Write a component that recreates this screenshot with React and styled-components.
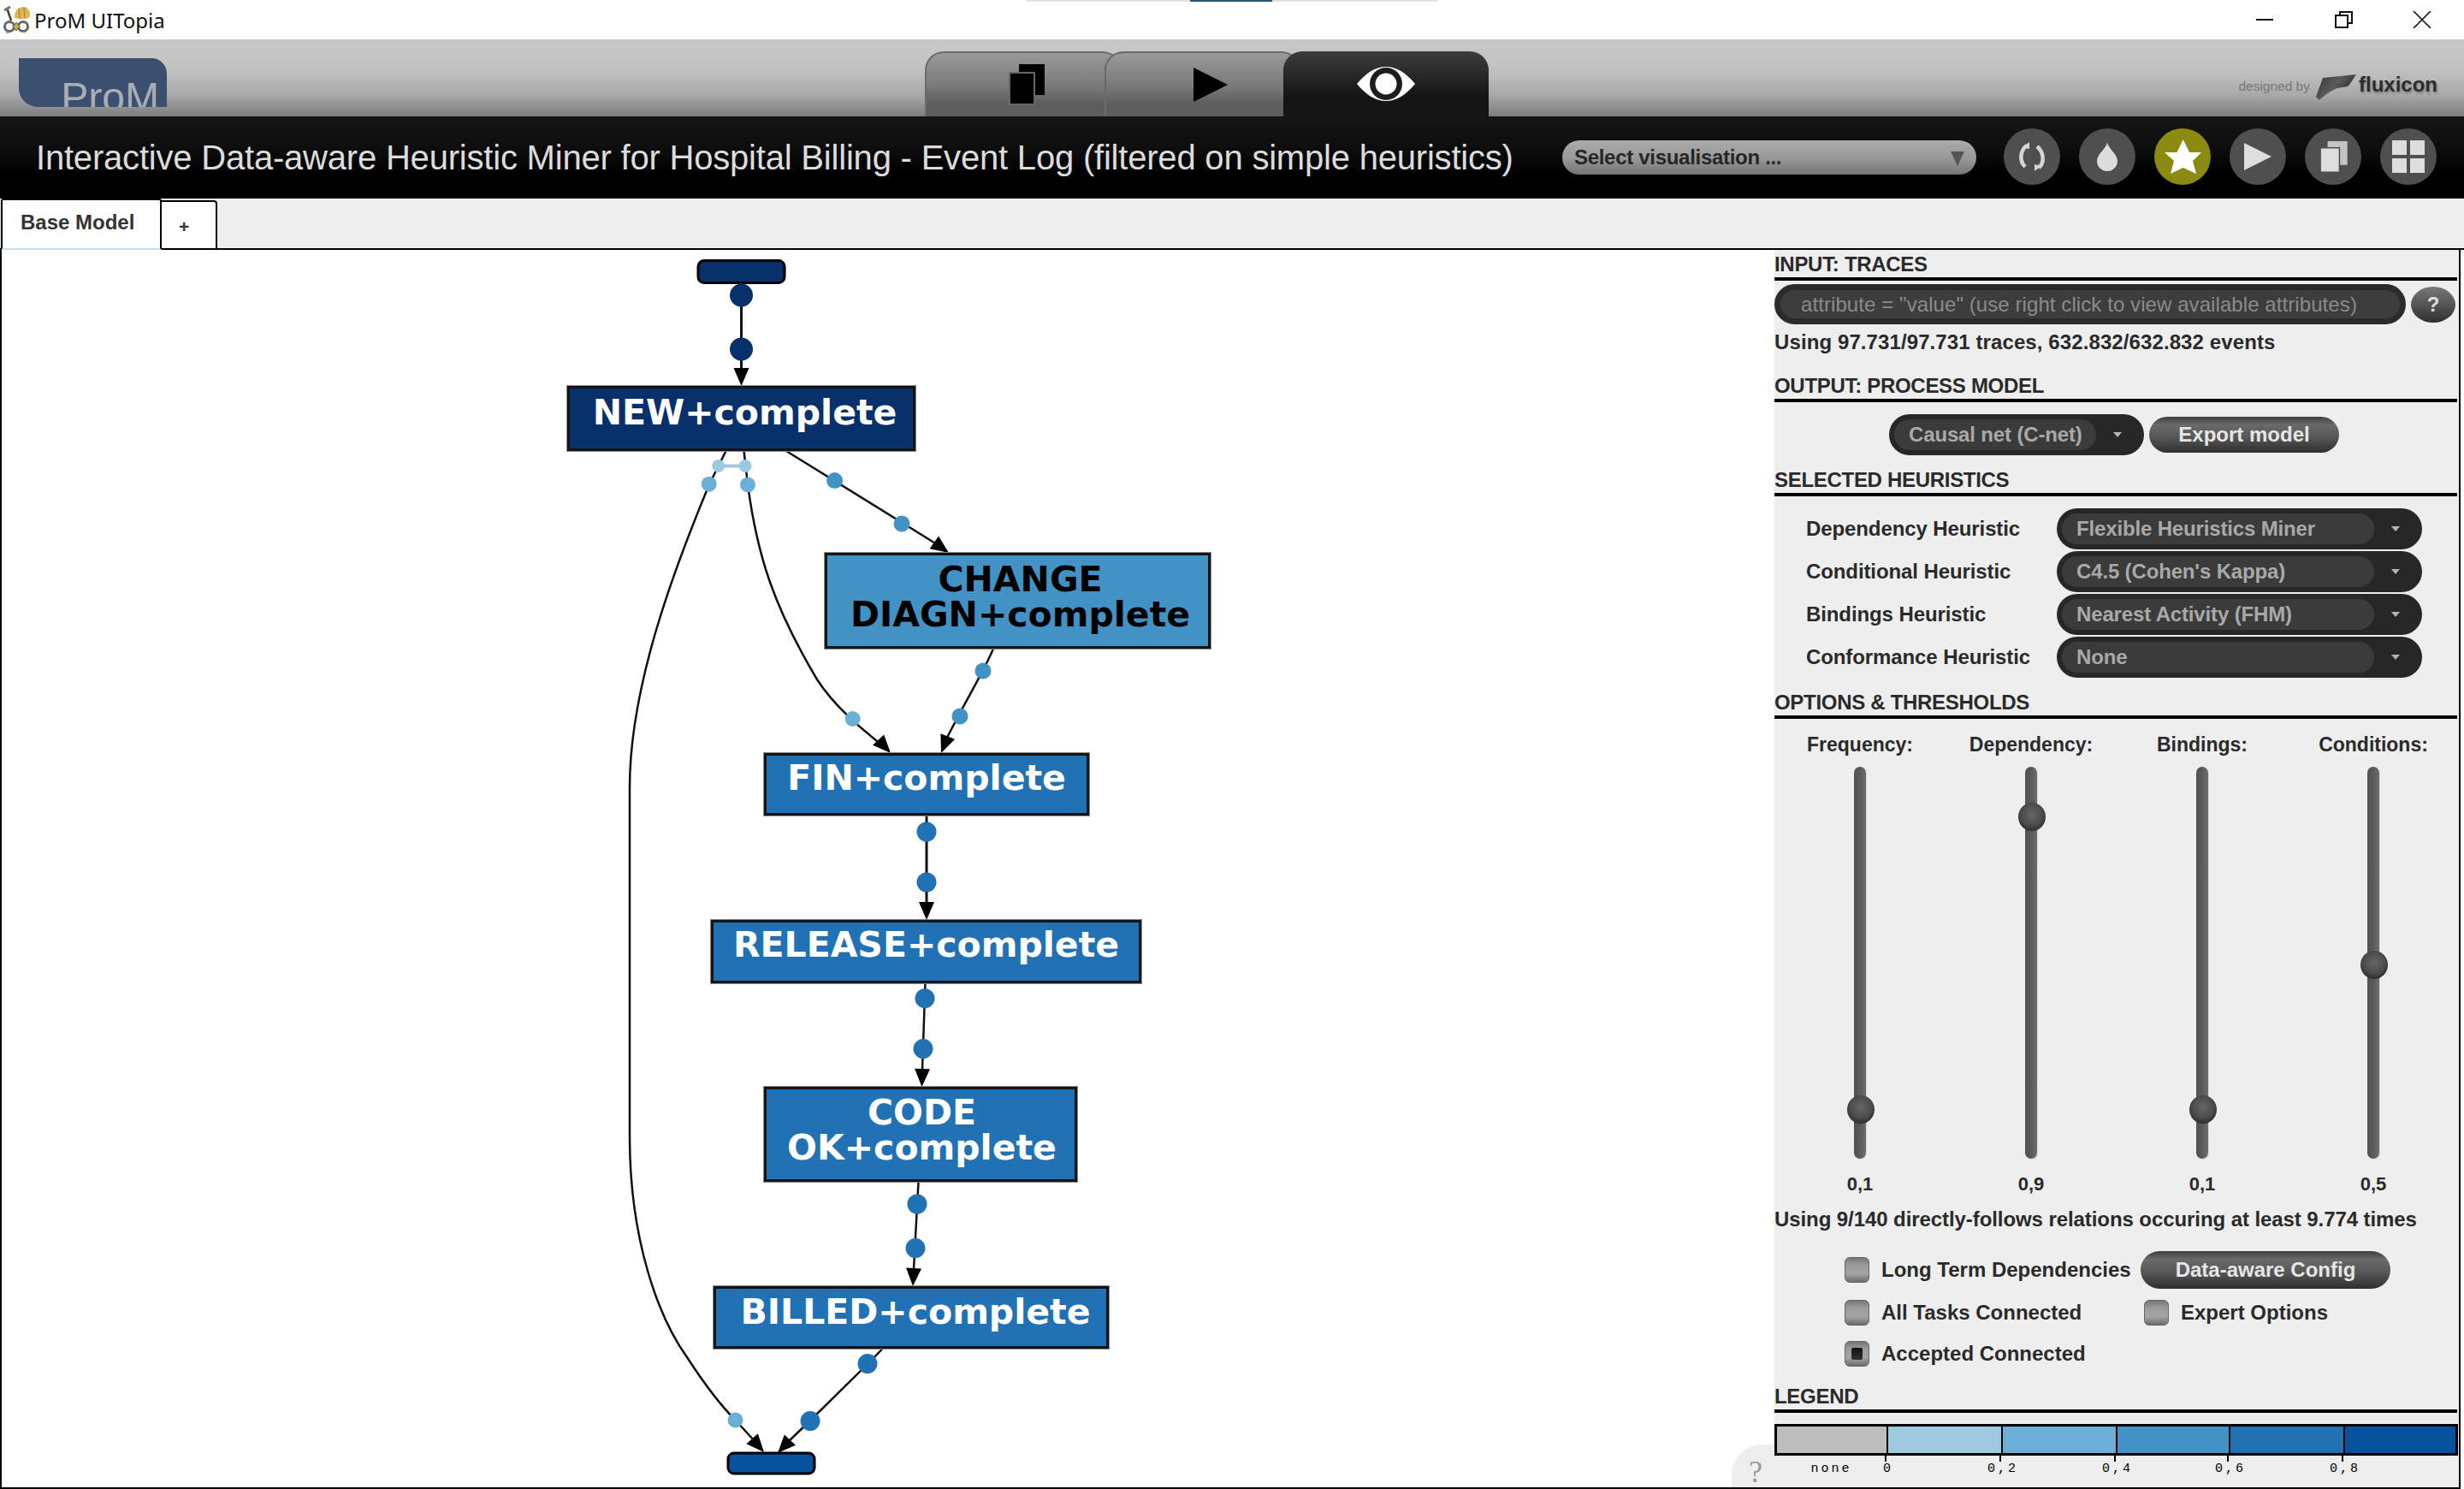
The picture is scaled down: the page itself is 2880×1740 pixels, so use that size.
import React from 'react'
import styled, { createGlobalStyle } from 'styled-components'

const GlobalStyle = createGlobalStyle`
    html, body { margin: 0; padding: 0; background: #fff; height: 1740px; overflow: hidden; }
    body { font-family: "Liberation Sans", Arial, sans-serif; }
    * { box-sizing: border-box; }
`

const Page = styled.div`
    width: 2880px;
    height: 1740px;
    display: flex;
    flex-direction: column;
    position: relative;
    overflow: hidden;
    background: #fff;
`

/* window chrome */
const TaskStrip = styled.div`
    position: absolute;
    left: 1199px;
    top: 0;
    width: 482px;
    height: 2px;
    background: linear-gradient(90deg, #e4e4e4 0 192px, #2b5570 192px 288px, #e4e4e4 288px);
`

const TitleBar = styled.div`
    height: 46px;
    display: flex;
    align-items: center;
    padding: 0 3px 0 3px;
    background: #fff;
`

const AppName = styled.span`
    margin-left: 5px;
    font-family: "Noto Sans", sans-serif;
    font-size: 24px;
    color: #111;
`

const WindowControls = styled.div`
    margin-left: auto;
    display: flex;
`

const WindowButton = styled.div`
    width: 92px;
    height: 46px;
    display: flex;
    align-items: center;
    justify-content: center;
`

/* grey header */
const Header = styled.div`
    height: 90px;
    display: flex;
    align-items: flex-end;
    padding: 0 31px 0 22px;
    background: linear-gradient(180deg, #c8c8c8 0%, #c3c3c3 38%, #a9a9a9 72%, #7d7d7d 100%);
`

const Logo = styled.div`
    width: 173px;
    height: 57px;
    margin-bottom: 11px;
    padding: 22px 9px 0 0;
    overflow: hidden;
    text-align: right;
    background: #3b4f6e;
    border-radius: 0 18px 0 22px;
    font-size: 48px;
    line-height: 48px;
    color: #a9aeb6;
`

const PerspectiveTabs = styled.div`
    display: flex;
    margin-left: 886px;
`

const PerspectiveTab = styled.div`
    position: relative;
    width: ${props => props.$width}px;
    height: 76px;
    margin-left: ${props => props.$overlap}px;
    padding-left: ${props => props.$inset}px;
    display: flex;
    align-items: center;
    justify-content: center;
    border-radius: 22px 22px 0 0;
    border: ${props => props.$active ? 'none' : '2px solid #6a6a6a'};
    border-bottom: none;
    background: ${props => props.$active
        ? 'linear-gradient(180deg, #3c3c3c 0%, #262626 40%, #141414 72%, #141414 100%)'
        : 'linear-gradient(180deg, #999 0%, #7b7b7b 50%, #5d5d5d 82%, #5d5d5d 100%)'};
`

const Credit = styled.div`
    margin-left: auto;
    height: 90px;
    display: flex;
    align-items: flex-start;
    padding-top: 41px;
`

const DesignedBy = styled.span`
    margin: 3px 7px 0 0;
    font-size: 15.5px;
    line-height: 22px;
    color: #777;
`

const FluxWord = styled.span`
    margin: 2px 0 0 3px;
    font-size: 24px;
    line-height: 20px;
    font-weight: bold;
    color: #2c2c2c;
    text-shadow: 1px 2px 3px rgba(0, 0, 0, 0.3);
`

/* black toolbar */
const Toolbar = styled.div`
    height: 96px;
    display: flex;
    align-items: center;
    padding: 0 32px 0 42px;
    background: linear-gradient(180deg, #151515 0%, #0d0d0d 40%, #000 70%, #000 100%);
`

const Title = styled.div`
    font-size: 40px;
    color: #dcdcdc;
    white-space: nowrap;
    letter-spacing: -0.2px;
`

const VisualisationSelect = styled.div`
    width: 484px;
    height: 40px;
    margin-left: auto;
    display: flex;
    align-items: center;
    justify-content: space-between;
    padding: 0 14px;
    border-radius: 20px;
    background: linear-gradient(180deg, #ababab 0%, #9a9a9a 50%, #747474 100%);
    font-size: 24px;
    font-weight: bold;
    letter-spacing: -0.3px;
    color: #262626;
`

const SelectCaret = styled.span`
    width: 0;
    height: 0;
    margin-top: 2px;
    border-left: 8px solid transparent;
    border-right: 8px solid transparent;
    border-top: 17px solid #555;
`

const RoundButtons = styled.div`
    display: flex;
    gap: 22px;
    margin-left: 32px;
`

const RoundButton = styled.div`
    width: 66px;
    height: 66px;
    margin-top: -2px;
    border-radius: 50%;
    background: ${props => props.$on ? '#8b8b12' : '#4f4f4f'};
    display: flex;
    align-items: center;
    justify-content: center;
`

/* document tabs */
const TabStrip = styled.div`
    height: 60px;
    display: flex;
    align-items: flex-end;
    padding-left: 1px;
    background: #eee;
    border-bottom: 2px solid #000;
`

const DocTab = styled.div`
    width: 188px;
    height: 60px;
    margin-bottom: -2px;
    padding: 12px 0 0 21px;
    background: #fff;
    border: 2px solid #000;
    border-bottom: 2px solid #c9def2;
    border-radius: 3px 3px 0 0;
    font-size: 24px;
    line-height: 28px;
    font-weight: bold;
    color: #333;
`

const AddTab = styled.div`
    width: 65px;
    height: 56px;
    background: #fff;
    border: 2px solid #000;
    border-left: none;
    border-bottom: none;
    border-radius: 0 4px 0 0;
    padding: 17px 0 0 20px;
    font-size: 21px;
    line-height: 24px;
    font-weight: bold;
    color: #333;
`

const Workspace = styled.div`
    flex: 1;
    display: flex;
    padding-right: 2px;
    min-height: 0;
`

/* process model canvas */
const Canvas = styled.div`
    position: relative;
    width: 2074px;
    height: 1448px;
    background: #fff;
    border-bottom: 2px solid #000;
    box-shadow: inset 2px 0 0 #000;
`

const EdgeLayer = styled.svg`
    position: absolute;
    left: 0;
    top: 0;
`

const GraphNode = styled.div`
    position: absolute;
    left: ${props => props.$x}px;
    top: ${props => props.$y}px;
    width: ${props => props.$w}px;
    height: ${props => props.$h}px;
    padding-top: ${props => props.$pad}px;
    padding-left: ${props => props.$shift}px;
    background: ${props => props.$fill};
    border: 3px solid #141414;
    outline: 1px solid #8a8a8a;
    color: ${props => props.$ink};
    font-family: "DejaVu Sans", sans-serif;
    font-weight: bold;
    font-size: 41px;
    line-height: 41px;
    text-align: center;
    white-space: pre-line;
`

const HelpCorner = styled.div`
    position: absolute;
    right: 0;
    bottom: 0;
    width: 50px;
    height: 50px;
    padding: 14px 0 0 20px;
    border-radius: 36px 0 0 0;
    background: #eee;
    font-family: "Liberation Serif", serif;
    font-size: 36px;
    line-height: 36px;
    color: #9a9a9a;
`

/* right panel */
const Panel = styled.div`
    width: 802px;
    height: 1448px;
    padding-top: 3px;
    background: #eee;
    border-right: 2px solid #000;
    border-bottom: 2px solid #000;
    display: flex;
    flex-direction: column;
    color: #2a2a2a;
`

const SectionTitle = styled.div`
    height: 33px;
    margin-top: ${props => props.$top || 0}px;
    margin-right: 2px;
    border-bottom: 4px solid #000;
    font-size: 24px;
    line-height: 28px;
    font-weight: bold;
    letter-spacing: -0.3px;
`

const Note = styled.div`
    margin-top: ${props => props.$top}px;
    height: 28px;
    font-size: 24px;
    line-height: 28px;
    font-weight: bold;
    letter-spacing: ${props => props.$spacing}px;
    white-space: nowrap;
`

const FilterRow = styled.div`
    margin-top: 4px;
    display: flex;
    align-items: center;
    gap: 6px;
`

const FilterInput = styled.div`
    width: 738px;
    height: 47px;
    padding: 0 0 0 24px;
    display: flex;
    align-items: center;
    border: 7px solid #2b2b2b;
    border-radius: 24px;
    background: #3d3d3d;
    font-size: 24px;
    letter-spacing: 0.08px;
    color: #8b8b8b;
    white-space: nowrap;
`

const HelpButton = styled.div`
    width: 52px;
    height: 42px;
    border-radius: 50%;
    background: linear-gradient(180deg, #777 0%, #555 50%, #2f2f2f 100%);
    display: flex;
    align-items: center;
    justify-content: center;
    font-size: 24px;
    font-weight: bold;
    color: #ddd;
`

const OutputRow = styled.div`
    margin-top: 14px;
    padding-left: 134px;
    display: flex;
    align-items: center;
    gap: 6px;
`

const DarkSelect = styled.div`
    width: ${props => props.$width}px;
    height: 48px;
    padding: 6px;
    display: flex;
    align-items: stretch;
    border-radius: 24px;
    background: #272727;
`

const DarkSelectValue = styled.div`
    flex: 1;
    display: flex;
    align-items: center;
    padding-left: 17px;
    border-radius: 18px;
    background: #3b3b3b;
    font-size: 24px;
    font-weight: bold;
    letter-spacing: -0.15px;
    color: #a9a9a9;
    white-space: nowrap;
`

const DarkSelectCaret = styled.div`
    width: 50px;
    display: flex;
    align-items: center;
    justify-content: center;

    &::after {
        content: '';
        border-left: 5px solid transparent;
        border-right: 5px solid transparent;
        border-top: 6px solid #b5b5b5;
    }
`

const PillButton = styled.div`
    width: ${props => props.$width}px;
    height: ${props => props.$height}px;
    display: flex;
    align-items: center;
    justify-content: center;
    border-radius: 22px;
    background: linear-gradient(180deg, #3e3e3e 0%, #6a6a6a 22%, #585858 55%, #2f2f2f 100%);
    font-size: 24px;
    font-weight: bold;
    color: #e6e6e6;
    white-space: nowrap;
`

const HeuristicList = styled.div`
    margin-top: 14px;
    display: flex;
    flex-direction: column;
    gap: 2px;
`

const HeuristicRow = styled.div`
    display: flex;
    align-items: center;
    padding-left: 37px;
`

const HeuristicLabel = styled.div`
    width: 293px;
    font-size: 24px;
    font-weight: bold;
    letter-spacing: -0.1px;
    white-space: nowrap;
`

const Sliders = styled.div`
    margin-top: 16px;
    display: grid;
    grid-template-columns: repeat(4, 200px);
`

const SliderColumn = styled.div`
    display: flex;
    flex-direction: column;
    align-items: center;
`

const SliderName = styled.div`
    height: 28px;
    font-size: 23px;
    line-height: 28px;
    font-weight: bold;
`

const SliderTrack = styled.div`
    position: relative;
    width: 14px;
    height: 458px;
    margin-top: 12px;
    border-radius: 7px;
    background: linear-gradient(90deg, #505050 0%, #5a5a5a 50%, #6e6e6e 100%);
    box-shadow: 1px 1px 1px #d8d8d8;
`

const SliderThumb = styled.div`
    position: absolute;
    left: -8px;
    top: ${props => props.$at - 16}px;
    width: 32px;
    height: 33px;
    border-radius: 50%;
    background: radial-gradient(circle at 50% 42%, #666 0%, #4c4c4c 50%, #333 72%, #111 100%);
`

const SliderValue = styled.div`
    height: 28px;
    margin-top: 16px;
    font-size: 22px;
    line-height: 28px;
    font-weight: bold;
`

const OptionRow = styled.div`
    margin-top: ${props => props.$top}px;
    height: ${props => props.$height}px;
    display: flex;
    align-items: center;
    padding-left: 82px;
`

const Option = styled.label`
    display: flex;
    align-items: center;
    gap: 14px;
    width: ${props => props.$width}px;
    padding-left: ${props => props.$inset || 0}px;
    font-size: 24px;
    font-weight: bold;
    white-space: nowrap;
`

const CheckBox = styled.span`
    flex: none;
    width: 29px;
    height: 30px;
    padding: 7px;
    border-radius: 6px;
    background: linear-gradient(180deg, #777 0%, #9b9b9b 30%, #a5a5a5 65%, #6d6d6d 100%);
    border: 1px solid #666;

    &::after {
        content: '';
        display: ${props => props.$on ? 'block' : 'none'};
        width: 100%;
        height: 100%;
        border-radius: 2px;
        background: linear-gradient(180deg, #111 0%, #333 100%);
    }
`

const LegendBar = styled.div`
    width: 799px;
    height: 37px;
    margin-top: 13px;
    display: flex;
    border: 3px solid #000;
`

const LegendCell = styled.div`
    width: ${props => props.$width}px;
    background: ${props => props.$fill};
    border-right: ${props => props.$last ? 'none' : '2px solid #000'};
`

const LegendScale = styled.div`
    display: flex;
    font-family: "Liberation Mono", monospace;
    font-size: 15px;
    letter-spacing: 3px;
    line-height: 16px;
    color: #000;
`

const LegendMark = styled.div`
    position: relative;
    width: ${props => props.$width}px;
    height: 25px;
    padding-top: 8px;
    text-align: ${props => props.$plain ? 'center' : 'left'};

    &::before {
        content: '';
        display: ${props => props.$plain ? 'none' : 'block'};
        position: absolute;
        left: -1px;
        top: 0;
        width: 2px;
        height: 7px;
        background: #000;
    }
`

const LegendLabel = styled.span`
    display: inline-block;
    margin-left: 3px;
    transform: translateX(${props => props.$plain ? '0' : '-50%'});
`

const nodes = [
    { label: 'NEW+complete', x: 663, y: 451, w: 407, h: 76, fill: '#08306b', ink: '#fff', pad: 8, shift: 8 },
    { label: 'CHANGE\nDIAGN+complete', x: 964, y: 646, w: 451, h: 112, fill: '#4292c6', ink: '#000', pad: 8, shift: 6 },
    { label: 'FIN+complete', x: 893, y: 880, w: 380, h: 73, fill: '#2171b5', ink: '#fff', pad: 6, shift: 0 },
    { label: 'RELEASE+complete', x: 831, y: 1075, w: 503, h: 74, fill: '#2171b5', ink: '#fff', pad: 6, shift: 0 },
    { label: 'CODE\nOK+complete', x: 893, y: 1270, w: 366, h: 111, fill: '#2171b5', ink: '#fff', pad: 7, shift: 3 },
    { label: 'BILLED+complete', x: 834, y: 1503, w: 462, h: 73, fill: '#2171b5', ink: '#fff', pad: 7, shift: 10 },
]

const edges = [
    { d: 'M866.5 330 L866.5 432', tip: [866.5, 451], from: [866.5, 431], w: 3 },
    { d: 'M919 527 L1095 636', tip: [1109, 646], from: [1092, 634] },
    { d: 'M1161 758 C1150 785 1125 825 1104 868', tip: [1100, 880], from: [1108, 860] },
    { d: 'M869.5 527 L874 566 C885 650 905 710 955 794 C975 825 1005 850 1030 870', tip: [1041, 880], from: [1026, 864] },
    { d: 'M848.5 527 L829 566 C790 660 736 800 736 920 L736 1328 C736 1450 770 1540 803 1586 C825 1620 845 1645 860 1660 L882 1684', tip: [893, 1697], from: [878, 1680] },
    { d: 'M1031.6 1576 L1014 1594 L947 1660 L920 1686', tip: [909, 1698], from: [924, 1682] },
    { d: 'M1083 952 L1083 1055', tip: [1083, 1075], from: [1083, 1055], w: 3 },
    { d: 'M1081.5 1148 L1078 1250', tip: [1077.5, 1270], from: [1078, 1250] },
    { d: 'M1073.5 1381 L1068 1483', tip: [1067, 1503], from: [1068, 1483] },
]

const dots = [
    { x: 866.5, y: 345, r: 13.5, fill: '#08306b' },
    { x: 866.5, y: 408, r: 13.5, fill: '#08306b' },
    { x: 975.6, y: 561.6, r: 9.5, fill: '#4292c6' },
    { x: 1054, y: 612, r: 9.5, fill: '#4292c6' },
    { x: 1149, y: 784, r: 9.5, fill: '#4292c6' },
    { x: 1122, y: 837, r: 9.5, fill: '#4292c6' },
    { x: 828.7, y: 565.7, r: 9, fill: '#6baed6' },
    { x: 874, y: 566.5, r: 9, fill: '#6baed6' },
    { x: 996.6, y: 840, r: 9, fill: '#6baed6' },
    { x: 859.5, y: 1659.5, r: 9, fill: '#6baed6' },
    { x: 839.7, y: 544.5, r: 7.5, fill: '#9ecae1' },
    { x: 871, y: 544.5, r: 7.5, fill: '#9ecae1' },
    { x: 1083, y: 972, r: 11.5, fill: '#2171b5' },
    { x: 1083, y: 1031, r: 11.5, fill: '#2171b5' },
    { x: 1081, y: 1166.7, r: 11.5, fill: '#2171b5' },
    { x: 1079, y: 1225.6, r: 11.5, fill: '#2171b5' },
    { x: 1072, y: 1407, r: 11.5, fill: '#2171b5' },
    { x: 1070, y: 1458.6, r: 11.5, fill: '#2171b5' },
    { x: 1014, y: 1593.6, r: 11.5, fill: '#2171b5' },
    { x: 947, y: 1660.6, r: 11.5, fill: '#2171b5' },
]

const heuristics = [
    ['Dependency Heuristic', 'Flexible Heuristics Miner'],
    ['Conditional Heuristic', "C4.5 (Cohen's Kappa)"],
    ['Bindings Heuristic', 'Nearest Activity (FHM)'],
    ['Conformance Heuristic', 'None'],
]

const sliders = [
    { name: 'Frequency:', value: '0,1', at: 400 },
    { name: 'Dependency:', value: '0,9', at: 58 },
    { name: 'Bindings:', value: '0,1', at: 400 },
    { name: 'Conditions:', value: '0,5', at: 231 },
]

const legend = [
    { fill: '#bdbdbd', width: 130, label: 'none', plain: true },
    { fill: '#9ecae1', width: 134, label: '0' },
    { fill: '#6baed6', width: 134, label: '0,2' },
    { fill: '#4292c6', width: 132, label: '0,4' },
    { fill: '#2171b5', width: 134, label: '0,6' },
    { fill: '#08519c', width: 129, label: '0,8', last: true },
]

function arrowPoints([tx, ty], [fx, fy]) {
    const a = Math.atan2(ty - fy, tx - fx)
    const bx = tx - Math.cos(a) * 21
    const by = ty - Math.sin(a) * 21
    const nx = -Math.sin(a) * 9
    const ny = Math.cos(a) * 9
    return `${tx},${ty} ${bx + nx},${by + ny} ${bx - nx},${by - ny}`
}

const Graph = () => (
    <EdgeLayer width="2074" height="1446" viewBox="0 292 2074 1446">
        <rect x="816" y="304.5" width="101" height="26" rx="7" fill="#08306b" stroke="#000" strokeWidth="3" />
        <rect x="851" y="1698" width="101" height="24" rx="7" fill="#08519c" stroke="#000" strokeWidth="3" />
        {edges.map(e => (
            <g key={e.d}>
                <path d={e.d} fill="none" stroke="#111" strokeWidth={e.w || 2.5} />
                <polygon points={arrowPoints(e.tip, e.from)} fill="#000" />
            </g>
        ))}
        <line x1="840" y1="544.5" x2="871" y2="544.5" stroke="#9ecae1" strokeWidth="4" />
        {dots.map(d => <circle key={`${d.x}-${d.y}`} cx={d.x} cy={d.y} r={d.r} fill={d.fill} />)}
    </EdgeLayer>
)

const AppIcon = () => (
    <svg width="32" height="32" viewBox="0 0 32 32">
        <path d="M14 14 C13 5 19 1 25 1 C30 1 33 7 32 13 C27 16 19 16 14 14 Z" fill="#e0b85a" />
        <path d="M19 3 L20 14 M25 2 L26 14" stroke="#b08a30" strokeWidth="1.5" />
        <path d="M5 2 L10 17" stroke="#4d4030" strokeWidth="2.5" />
        <path d="M2 5 L9 1" stroke="#777" strokeWidth="3" />
        <circle cx="8" cy="24" r="5.5" fill="#fff" stroke="#666" strokeWidth="3" />
        <circle cx="24" cy="24" r="5.5" fill="#fff" stroke="#666" strokeWidth="3" />
        <path d="M16 19 L20 24 L16 29 L12 24 Z" fill="#b9b23c" stroke="#555" strokeWidth="1" />
        <path d="M4 30 L9 32 L4 32 Z M23 30 L28 30 L25 32 Z" fill="#b9b23c" />
    </svg>
)

const MinimizeIcon = () => (
    <svg width="20" height="2" viewBox="0 0 20 2"><rect width="20" height="2" fill="#111" /></svg>
)

const RestoreIcon = () => (
    <svg width="21" height="20" viewBox="0 0 21 20" fill="none" stroke="#111" strokeWidth="2">
        <rect x="1" y="5" width="14" height="14" />
        <path d="M6 5 V1 H20 V14 H15" />
    </svg>
)

const CloseIcon = () => (
    <svg width="22" height="20" viewBox="0 0 22 20" fill="none" stroke="#111" strokeWidth="1.6">
        <path d="M1 0 L21 20 M21 0 L1 20" />
    </svg>
)

const FluxMark = () => (
    <svg width="47" height="30" viewBox="0 0 47 30">
        <defs>
            <linearGradient id="fluxFill" x1="0" y1="0" x2="1" y2="0.5">
                <stop offset="0" stopColor="#333" />
                <stop offset="0.55" stopColor="#5c5c5c" />
                <stop offset="1" stopColor="#2a2a2a" />
            </linearGradient>
        </defs>
        <path d="M8 4 L47 0 C43 6 40 11 37 14 L25 16 C17 19 9 25 4 30 L0 26 Z" fill="url(#fluxFill)" />
    </svg>
)

const CopiesIcon = ({ front, back, outline, width, height }) => (
    <svg width={width} height={height} viewBox="0 0 42 48">
        <rect x="12" y="0" width="30" height="36" fill={back} />
        <rect x="1" y="10" width="29" height="37" fill={front} stroke={outline} strokeWidth="2" />
    </svg>
)

const EyeIcon = () => (
    <svg width="68" height="40" viewBox="0 0 68 40">
        <path d="M0 20 C12 6 22 0 34 0 C46 0 56 6 68 20 C56 34 46 40 34 40 C22 40 12 34 0 20 Z" fill="#fff" />
        <circle cx="34" cy="20" r="19" fill="#1d1d1d" />
        <circle cx="34" cy="20" r="12.5" fill="#fff" />
    </svg>
)

const RefreshGlyph = () => (
    <svg width="32" height="34" viewBox="0 0 32 34" fill="none" stroke="#d6d6d6" strokeWidth="4.5">
        <path d="M10 4 C2 10 1 22 8 29" />
        <path d="M22 5 C30 12 31 24 24 30" />
        <path d="M13 0 L13 8 L5 6 Z M19 34 L19 26 L27 28 Z" fill="#d6d6d6" stroke="none" />
    </svg>
)

const DropGlyph = () => (
    <svg width="24" height="34" viewBox="0 0 24 34">
        <path d="M12 0 C12.5 7 24 14 24 22 A12 12 0 0 1 0 22 C0 14 11.5 7 12 0 Z" fill="#dcdcdc" />
    </svg>
)

const StarGlyph = () => (
    <svg width="43" height="40" viewBox="0 0 43 40">
        <path d="M21.7 0 L29 15 L43 15 L33 25 L37 40 L21.7 33 L7 40 L11 25 L0 15 L14.5 15 Z" fill="#fff" />
    </svg>
)

const PlayGlyph = ({ width, height, color }) => (
    <svg width={width} height={height} viewBox="0 0 10 10">
        <path d="M0 0 L10 5 L0 10 Z" fill={color} />
    </svg>
)

const GridGlyph = () => (
    <svg width="38" height="38" viewBox="0 0 38 38" fill="#ddd">
        <rect width="17" height="17" />
        <rect x="21" width="17" height="17" />
        <rect y="21" width="17" height="17" />
        <rect x="21" y="21" width="17" height="17" />
    </svg>
)

export default function App() {
    return (
        <Page>
            <GlobalStyle />
            <TaskStrip />
            <TitleBar>
                <AppIcon />
                <AppName>ProM UITopia</AppName>
                <WindowControls>
                    <WindowButton><MinimizeIcon /></WindowButton>
                    <WindowButton><RestoreIcon /></WindowButton>
                    <WindowButton><CloseIcon /></WindowButton>
                </WindowControls>
            </TitleBar>

            <Header>
                <Logo>ProM</Logo>
                <PerspectiveTabs>
                    <PerspectiveTab $width={230} $overlap={0} $inset={8}>
                        <CopiesIcon width={42} height={48} front="#000" back="#000" outline="#666" />
                    </PerspectiveTab>
                    <PerspectiveTab $width={229} $overlap={-20} $inset={18}>
                        <PlayGlyph width={40} height={40} color="#000" />
                    </PerspectiveTab>
                    <PerspectiveTab $width={240} $overlap={-20} $inset={0} $active>
                        <EyeIcon />
                    </PerspectiveTab>
                </PerspectiveTabs>
                <Credit>
                    <DesignedBy>designed by</DesignedBy>
                    <FluxMark />
                    <FluxWord>fluxicon</FluxWord>
                </Credit>
            </Header>

            <Toolbar>
                <Title>Interactive Data-aware Heuristic Miner for Hospital Billing - Event Log (filtered on simple heuristics)</Title>
                <VisualisationSelect>
                    Select visualisation ...
                    <SelectCaret />
                </VisualisationSelect>
                <RoundButtons>
                    <RoundButton><RefreshGlyph /></RoundButton>
                    <RoundButton><DropGlyph /></RoundButton>
                    <RoundButton $on><StarGlyph /></RoundButton>
                    <RoundButton><PlayGlyph width={32} height={32} color="#ddd" /></RoundButton>
                    <RoundButton><CopiesIcon width={33} height={37} front="#ddd" back="#c4c4c4" outline="#4f4f4f" /></RoundButton>
                    <RoundButton><GridGlyph /></RoundButton>
                </RoundButtons>
            </Toolbar>

            <TabStrip>
                <DocTab>Base Model</DocTab>
                <AddTab>+</AddTab>
            </TabStrip>

            <Workspace>
                <Canvas>
                    <Graph />
                    {nodes.map(n => (
                        <GraphNode
                            key={n.label}
                            $x={n.x}
                            $y={n.y - 292}
                            $w={n.w}
                            $h={n.h}
                            $fill={n.fill}
                            $ink={n.ink}
                            $pad={n.pad}
                            $shift={n.shift}
                        >
                            {n.label}
                        </GraphNode>
                    ))}
                    <HelpCorner>?</HelpCorner>
                </Canvas>

                <Panel>
                    <SectionTitle>INPUT: TRACES</SectionTitle>
                    <FilterRow>
                        <FilterInput>attribute = "value" (use right click to view available attributes)</FilterInput>
                        <HelpButton>?</HelpButton>
                    </FilterRow>
                    <Note $top={7} $spacing={0.1}>Using 97.731/97.731 traces, 632.832/632.832 events</Note>

                    <SectionTitle $top={23}>OUTPUT: PROCESS MODEL</SectionTitle>
                    <OutputRow>
                        <DarkSelect $width={298}>
                            <DarkSelectValue>Causal net (C-net)</DarkSelectValue>
                            <DarkSelectCaret />
                        </DarkSelect>
                        <PillButton $width={222} $height={42}>Export model</PillButton>
                    </OutputRow>

                    <SectionTitle $top={15}>SELECTED HEURISTICS</SectionTitle>
                    <HeuristicList>
                        {heuristics.map(([label, value]) => (
                            <HeuristicRow key={label}>
                                <HeuristicLabel>{label}</HeuristicLabel>
                                <DarkSelect $width={427}>
                                    <DarkSelectValue>{value}</DarkSelectValue>
                                    <DarkSelectCaret />
                                </DarkSelect>
                            </HeuristicRow>
                        ))}
                    </HeuristicList>

                    <SectionTitle $top={15}>OPTIONS &amp; THRESHOLDS</SectionTitle>
                    <Sliders>
                        {sliders.map(s => (
                            <SliderColumn key={s.name}>
                                <SliderName>{s.name}</SliderName>
                                <SliderTrack>
                                    <SliderThumb $at={s.at} />
                                </SliderTrack>
                                <SliderValue>{s.value}</SliderValue>
                            </SliderColumn>
                        ))}
                    </Sliders>
                    <Note $top={13} $spacing={-0.08}>Using 9/140 directly-follows relations occuring at least 9.774 times</Note>

                    <OptionRow $top={23} $height={44}>
                        <Option $width={346}><CheckBox />Long Term Dependencies</Option>
                        <PillButton $width={292} $height={44}>Data-aware Config</PillButton>
                    </OptionRow>
                    <OptionRow $top={13} $height={30}>
                        <Option $width={346}><CheckBox />All Tasks Connected</Option>
                        <Option $inset={4}><CheckBox />Expert Options</Option>
                    </OptionRow>
                    <OptionRow $top={18} $height={30}>
                        <Option $width={346}><CheckBox $on />Accepted Connected</Option>
                    </OptionRow>

                    <SectionTitle $top={21}>LEGEND</SectionTitle>
                    <LegendBar>
                        {legend.map(l => (
                            <LegendCell key={l.label} $width={l.width} $fill={l.fill} $last={l.last} />
                        ))}
                    </LegendBar>
                    <LegendScale>
                        {legend.map(l => (
                            <LegendMark key={l.label} $width={l.width} $plain={l.plain}>
                                <LegendLabel $plain={l.plain}>{l.label}</LegendLabel>
                            </LegendMark>
                        ))}
                    </LegendScale>
                </Panel>
            </Workspace>
        </Page>
    )
}
